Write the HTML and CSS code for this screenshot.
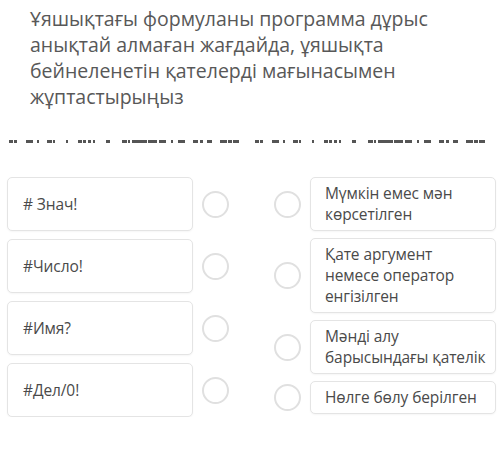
FILE: index.html
```html
<!DOCTYPE html>
<html lang="kk">
<head>
  <meta charset="UTF-8" />
  <title>Сәйкестендіру</title>
  <link rel="stylesheet" href="styles.css">
</head>
<body>
  <div class="quiz">
    <p class="quiz__question">Ұяшықтағы формуланы программа дұрыс анықтай алмаған жағдайда, ұяшықта бейнеленетін қателерді мағынасымен жұптастырыңыз</p>

    <!-- clipped hint line under the question -->
    <svg class="quiz__rule" viewBox="0 0 500 3" preserveAspectRatio="none">
      <g id="seg" fill="#555">
        <rect x="9" width="4" height="3"/><rect x="14" width="3" height="3"/>
        <rect x="26" width="7" height="3"/><rect x="37" width="2" height="3"/>
        <rect x="47" width="5" height="3"/><rect x="53" width="2" height="3"/>
        <rect x="66" width="2" height="3"/>
        <rect x="78" width="4" height="3"/><rect x="83" width="3" height="3"/>
        <rect x="88" width="3" height="3"/><rect x="93" width="2" height="3"/>
        <rect x="106" width="4" height="3"/>
        <rect x="122" width="5" height="3"/><rect x="128" width="2" height="3"/>
        <rect x="132" width="15" height="3"/><rect x="148" width="9" height="3"/>
        <rect x="159" width="7" height="3"/><rect x="171" width="2" height="3"/>
        <rect x="178" width="7" height="3"/>
        <rect x="193" width="5" height="3"/><rect x="200" width="3" height="3"/>
        <rect x="207" width="5" height="3"/>
        <rect x="220" width="7" height="3"/><rect x="228" width="4" height="3"/>
        <rect x="233" width="6" height="3"/>
      </g>
      <use href="#seg" x="246"/>
    </svg>

    <div class="match">
      <div class="match__col match__col--left">
        <div class="pair">
          <div class="card card--fixed"># Знач!</div>
          <span class="radio"></span>
        </div>
        <div class="pair">
          <div class="card card--fixed">#Число!</div>
          <span class="radio"></span>
        </div>
        <div class="pair">
          <div class="card card--fixed">#Имя?</div>
          <span class="radio"></span>
        </div>
        <div class="pair">
          <div class="card card--fixed">#Дел/0!</div>
          <span class="radio"></span>
        </div>
      </div>

      <div class="match__col match__col--right">
        <div class="pair">
          <span class="radio"></span>
          <div class="card">Мүмкін емес мән көрсетілген</div>
        </div>
        <div class="pair">
          <span class="radio"></span>
          <div class="card">Қате аргумент<br>немесе оператор<br>енгізілген</div>
        </div>
        <div class="pair">
          <span class="radio"></span>
          <div class="card">Мәнді алу барысындағы қателік</div>
        </div>
        <div class="pair">
          <span class="radio"></span>
          <div class="card">Нөлге бөлу берілген</div>
        </div>
      </div>
    </div>
  </div>
</body>
</html>
```

FILE: styles.css
```css
*{margin:0;padding:0;box-sizing:border-box;}
body{
  font-family:"Open Sans","Noto Sans",Arial,sans-serif;
  background:#fff;color:#4a4a4a;
}
.quiz{padding:6px 4px 0 7px;}
.quiz__question{
  font-size:19.5px;line-height:26px;color:#585858;
  padding:0 20px 0 23px;
}
.quiz__rule{display:block;width:500px;height:3px;margin:30px 0 0 -7px;}

.match{display:flex;margin-top:34px;}
.match__col{display:flex;flex-direction:column;gap:8px;}
.match__col--left{width:243px;}
.match__col--right{width:246px;padding-left:24px;gap:7px;}

.pair{display:flex;align-items:center;gap:9px;}

.card{
  width:186px;
  border:1px solid #e4e4e4;border-radius:5px;
  box-shadow:0 1px 2px rgba(0,0,0,.04);
  background:#fff;
  font-size:15.5px;line-height:21px;color:#4a4a4a;
  padding:5px 4px 5px 14px;
  letter-spacing:-.1px;
}
.card--fixed{height:54px;display:flex;align-items:center;padding-left:15px;}

.radio{
  flex:none;width:27px;height:27px;border-radius:50%;
  border:2.5px solid #e0e0e0;background:#fff;
}
```
